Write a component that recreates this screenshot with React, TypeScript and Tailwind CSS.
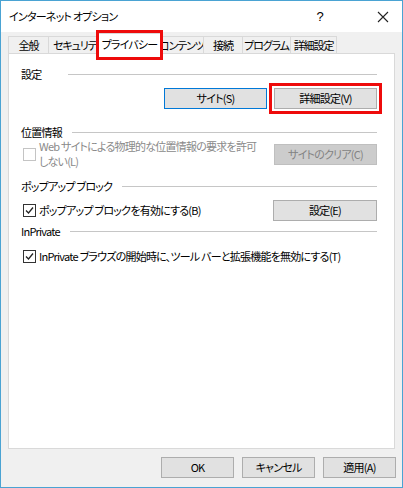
import React from 'react';

const font = "font-['Meiryo_UI','Noto_Sans_CJK_JP',sans-serif] [font-feature-settings:'palt']";

interface TabProps {
  label: string;
  width: string;
  selected?: boolean;
}

const Tab: React.FC<TabProps> = ({ label, width, selected }) => {
  if (selected) {
    return (
      <div className={`relative z-10 -mx-[1px] -mb-px flex h-[21px] items-center justify-center whitespace-nowrap border border-b-0 border-[#d9d9d9] bg-white ${width}`}>
        <span className="mt-[1px]">{label}</span>
        <div className="absolute -top-[4px] -bottom-[6px] -left-[3px] -right-[3px] border-[3px] border-[#ee0b0b]" />
      </div>
    );
  }
  return (
    <div className={`flex h-[17px] items-center justify-center overflow-hidden whitespace-nowrap border border-b-0 border-l-0 border-[#d9d9d9] bg-[#f0f0f0] tracking-[-0.1em] first:border-l ${width}`}>
      {label}
    </div>
  );
};

const SectionHeader: React.FC<{ label: string; labelWidth?: string }> = ({ label, labelWidth = '' }) => (
  <div className="flex h-[15px] items-center gap-[10px]">
    <span className={`whitespace-nowrap ${labelWidth}`}>{label}</span>
    <div className="h-px flex-1 bg-[#c6c6c6]" />
  </div>
);

type ButtonKind = 'normal' | 'focused' | 'disabled';

const Button: React.FC<{ label: string; kind?: ButtonKind; className?: string }> = ({ label, kind = 'normal', className = '' }) => {
  const styles = {
    normal: 'border-[#adadad] bg-[#e1e1e1] text-black',
    focused: 'border-[#0078d7] bg-[#e1e1e1] text-black',
    disabled: 'border-[#bfbfbf] bg-[#cccccc] text-[#838383]',
  }[kind];
  return (
    <div className={`flex h-[21px] items-center justify-center whitespace-nowrap border ${styles} ${className}`}>
      {label}
    </div>
  );
};

const CheckBox: React.FC<{ checked?: boolean; disabled?: boolean }> = ({ checked, disabled }) => (
  <div className={`flex h-[13px] w-[13px] shrink-0 items-center justify-center border bg-white ${disabled ? 'border-[#c4c4c4]' : 'border-[#333333]'}`}>
    {checked && (
      <svg width="9" height="9" viewBox="0 0 9 9">
        <path d="M1 4.5 L3.5 7 L8 1.5" fill="none" stroke="#222" strokeWidth="1.3" />
      </svg>
    )}
  </div>
);

export default function App() {
  return (
    <div className={`flex h-[488px] w-[403px] flex-col border border-[#4aa3d3] bg-[#f0f0f0] text-[11px] leading-[15px] tracking-[-0.07em] text-black ${font}`}>
      {/* title bar */}
      <div className="flex h-[31px] items-center bg-white pl-[8px]">
        <span>インターネット オプション</span>
        <span className="ml-auto mr-[54px] font-['Liberation_Sans',sans-serif] text-[13px]">?</span>
        <svg width="12" height="12" viewBox="0 0 12 12" className="mr-[13px]">
          <path d="M1 1 L11 11 M11 1 L1 11" stroke="#222" strokeWidth="1.1" />
        </svg>
      </div>

      {/* tabs */}
      <div className="mt-[1px] flex h-[20px] items-end pl-[7px]">
        <Tab label="全般" width="w-[41px]" />
        <Tab label="セキュリティ" width="w-[50px] !justify-start pl-[4px]" />
        <Tab label="プライバシー" width="w-[63px]" selected />
        <Tab label="コンテンツ" width="w-[44px]" />
        <Tab label="接続" width="w-[39px]" />
        <Tab label="プログラム" width="w-[48px]" />
        <Tab label="詳細設定" width="w-[46px]" />
      </div>

      {/* panel */}
      <div className="mx-[7px] flex flex-1 flex-col border border-[#d9d9d9] bg-white pl-[12px] pr-[17px] pt-[13px]">
        <SectionHeader label="設定" labelWidth="w-[37px]" />
        <div className="mt-[6px] flex justify-end gap-[7px]">
          <Button label="サイト(S)" kind="focused" className="w-[103px]" />
          <Button label="詳細設定(V)" className="w-[103px] outline-[3px] outline-offset-[2px] outline-[#ee0b0b] outline-solid" />
        </div>

        <div className="mt-[16px]">
          <SectionHeader label="位置情報" />
        </div>
        <div className="-mt-[1px] flex items-center">
          <div className="flex flex-1 items-center gap-[3px] pl-[2px] text-[#8a8a8a]">
            <CheckBox disabled />
            <span className="whitespace-nowrap leading-[15px]">
              Web サイトによる物理的な位置情報の要求を許可
              <br />
              しない(L)
            </span>
          </div>
          <Button label="サイトのクリア(C)" kind="disabled" className="w-[103px]" />
        </div>

        <div className="mt-[10px]">
          <SectionHeader label="ポップアップ ブロック" />
        </div>
        <div className="mt-[6px] flex items-center">
          <div className="flex flex-1 items-center gap-[3px] pl-[2px]">
            <CheckBox checked />
            <span className="whitespace-nowrap">ポップアップ ブロックを有効にする(B)</span>
          </div>
          <Button label="設定(E)" className="w-[104px]" />
        </div>

        <div className="mt-[3px]">
          <SectionHeader label="InPrivate" />
        </div>
        <div className="mt-[10px] flex items-center gap-[3px] pl-[2px]">
          <CheckBox checked />
          <span className="whitespace-nowrap">InPrivate ブラウズの開始時に、ツール バーと拡張機能を無効にする(T)</span>
        </div>
      </div>

      {/* footer */}
      <div className="flex h-[38px] justify-end gap-[8px] pr-[6px] pt-[8px]">
        <Button label="OK" className="w-[73px]" />
        <Button label="キャンセル" className="w-[73px]" />
        <Button label="適用(A)" className="w-[73px]" />
      </div>
    </div>
  );
}
